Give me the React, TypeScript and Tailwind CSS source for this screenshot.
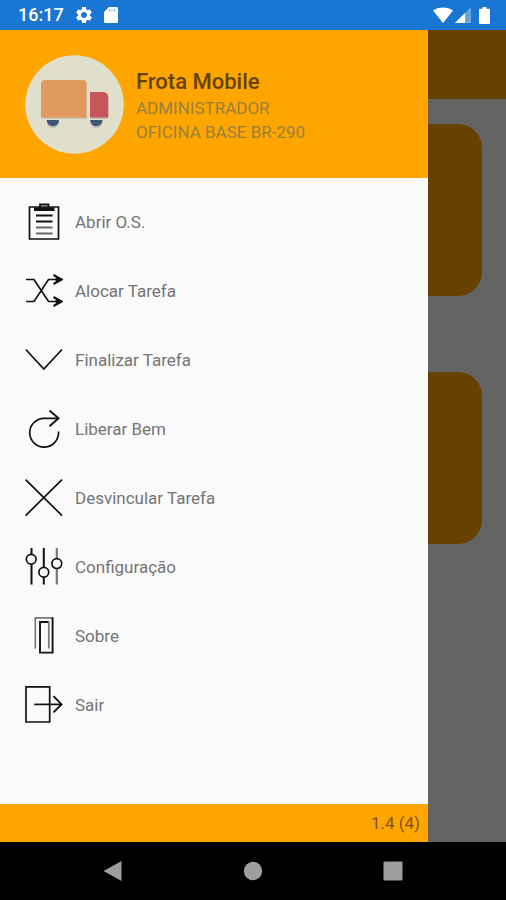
import type { ReactNode } from "react";

const menuItems: { label: string; icon: ReactNode }[] = [
  {
    label: "Abrir O.S.",
    icon: (
      <>
        <path d="M4.5 4H33.5V36H4.5Z" />
        <path d="M15 5.5V1.5H23.5V5.5" strokeWidth="1.8" />
        <path d="M9 6.2H29.5" strokeWidth="3.6" />
        <path d="M11 12.5H27.5M11 18.5H27.5" strokeWidth="2" />
        <path d="M11 24.5H27.5M11 30.5H27.5" stroke="#666" strokeWidth="2" />
      </>
    ),
  },
  {
    label: "Alocar Tarefa",
    icon: (
      <>
        <path d="M1 7.5H9L23.5 29.5H35M1 29.5H9L23.5 7.5H35" />
        <path d="M28.5 3L37 7.5L28.5 12M28.5 25L37 29.5L28.5 34" strokeWidth="2" />
        <path d="M31 5.5L36 7.5L31 9.5ZM31 27.5L36 29.5L31 31.5Z" fill="#111" strokeWidth="0.8" />
      </>
    ),
  },
  {
    label: "Finalizar Tarefa",
    icon: <path d="M0.8 8.5L18.8 28L37 8.5" />,
  },
  {
    label: "Liberar Bem",
    icon: (
      <>
        <path d="M33.5 21.5A14.4 14.4 0 1 1 19 8.3H33.5" />
        <path d="M24.5 0.5L33.5 8.3L24.5 16.3" strokeWidth="1.9" />
      </>
    ),
  },
  {
    label: "Desvincular Tarefa",
    icon: <path d="M0.6 0.6L37 36.6M37 0.6L0.6 36.6" />,
  },
  {
    label: "Configuração",
    icon: (
      <>
        <path d="M6.5 0V6.5M6.5 16V36.5M18.8 0V19.5M18.8 29V36.5" strokeWidth="2" />
        <path d="M31.8 0V10.5M31.8 20.5V36.5" stroke="#777" strokeWidth="2.2" />
        <circle cx="6.2" cy="11.3" r="4.9" />
        <circle cx="18.8" cy="24.3" r="4.9" />
        <circle cx="31.8" cy="15.6" r="4.9" />
      </>
    ),
  },
  {
    label: "Sobre",
    icon: (
      <>
        <path d="M10.3 31.5V0.8H27.6" stroke="#777" />
        <path d="M27.6 0.2V35.6H15V5H23.8" strokeWidth="1.9" />
        <path d="M23.8 5V31.5" stroke="#777" />
      </>
    ),
  },
  {
    label: "Sair",
    icon: (
      <>
        <path d="M1 0.8H24.7V36H1Z" />
        <path d="M9.3 18.4H36" />
        <path d="M28.5 10.2L36.5 18.4L28.5 26.4" strokeWidth="1.9" />
      </>
    ),
  },
];

function StatusBar() {
  return (
    <header className="flex h-[30px] items-center bg-[#1976d2] pl-[18px] pr-4 text-white">
      <span className="text-lg font-medium leading-6">16:17</span>
      <svg className="ml-[10px] size-5" viewBox="0 0 24 24" fill="currentColor" aria-hidden="true">
        <path d="M19.14 12.94c.04-.3.06-.61.06-.94 0-.32-.02-.64-.07-.94l2.03-1.58a.49.49 0 0 0 .12-.61l-1.92-3.32a.488.488 0 0 0-.59-.22l-2.39.96c-.5-.38-1.03-.7-1.62-.94l-.36-2.54a.484.484 0 0 0-.48-.41h-3.84c-.24 0-.43.17-.47.41l-.36 2.54c-.59.24-1.13.57-1.62.94l-2.39-.96c-.22-.08-.47 0-.59.22L2.74 8.87c-.12.21-.08.47.12.61l2.03 1.58c-.05.3-.09.63-.09.94s.02.64.07.94l-2.03 1.58a.49.49 0 0 0-.12.61l1.92 3.32c.12.22.37.29.59.22l2.39-.96c.5.38 1.03.7 1.62.94l.36 2.54c.05.24.24.41.48.41h3.84c.24 0 .44-.17.47-.41l.36-2.54c.59-.24 1.13-.56 1.62-.94l2.39.96c.22.08.47 0 .59-.22l1.92-3.32c.12-.22.07-.47-.12-.61l-2.01-1.58zM12 15.6A3.61 3.61 0 0 1 8.4 12c0-1.98 1.62-3.6 3.6-3.6s3.6 1.62 3.6 3.6-1.62 3.6-3.6 3.6z" />
      </svg>
      <svg className="ml-[10px] h-4 w-[14px]" viewBox="0 0 14 16" fill="currentColor" aria-hidden="true">
        <path d="M5 0H12.5Q14 0 14 1.5V14.5Q14 16 12.5 16H1.5Q0 16 0 14.5V5Z" />
        <path d="M5.5 2V4.5M8 2V4.5M10.5 2V4.5" stroke="#7fb2e8" strokeWidth="1" />
      </svg>
      <svg className="ml-auto h-4 w-5" viewBox="0 0 20 16" fill="currentColor" aria-hidden="true">
        <path d="M10 16L0 3.6Q4.2 0.5 10 0.5T20 3.6Z" />
      </svg>
      <svg className="ml-0.5 size-4" viewBox="0 0 16 16" fill="currentColor" aria-hidden="true">
        <path d="M0 16L16 0V16Z" opacity="0.35" />
        <path d="M0 16L10 6V16Z" />
      </svg>
      <svg className="ml-2 h-[17px] w-[11px]" viewBox="0 0 11 17" fill="currentColor" aria-hidden="true">
        <path d="M3.5 0H7.5V1.8H10Q11 1.8 11 2.8V16Q11 17 10 17H1Q0 17 0 16V2.8Q0 1.8 1 1.8H3.5Z" />
      </svg>
    </header>
  );
}

function TruckAvatar() {
  return (
    <svg className="size-[99px] shrink-0" viewBox="0 0 99 99" aria-hidden="true">
      <circle cx="49.5" cy="49.5" r="49.3" fill="#dfdfcb" />
      <path d="M21.7 67A6.2 6.2 0 0 0 34.1 67ZM65.1 67A6.2 6.2 0 0 0 77.5 67Z" fill="#c0c3b3" />
      <path d="M16 60H61.7V64H16ZM65 60H83.3V64H65Z" fill="#c5c5b2" />
      <path d="M21.7 65A6.2 6.2 0 0 0 34.1 65ZM65.1 65A6.2 6.2 0 0 0 77.5 65Z" fill="#3f5578" />
      <path d="M20 25H57.7Q61.7 25 61.7 29V62.5H18Q16 62.5 16 60.5V29Q16 25 20 25Z" fill="#e0995e" />
      <path d="M65 37H78.3Q83.3 37.5 83.3 42.5V62.5H65Z" fill="#c7555c" />
    </svg>
  );
}

function Drawer() {
  return (
    <aside className="z-10 col-start-1 row-start-1 mr-[78px] flex flex-col bg-[#fafafa]">
      <div className="flex h-[148px] items-center gap-3 bg-[#ffa500] pl-[25px]">
        <TruckAvatar />
        <div className="pt-1 text-[17px] leading-6 text-[#98803e]">
          <h1 className="text-[22px] font-medium leading-7 text-[#664200]">Frota Mobile</h1>
          <p>ADMINISTRADOR</p>
          <p>OFICINA BASE BR-290</p>
        </div>
      </div>
      <nav className="flex-1 py-[9px]">
        <ul>
          {menuItems.map((item) => (
            <li key={item.label}>
              <a href="#" className="flex h-[69px] items-center gap-3 pl-[25px] text-[17px] leading-6 text-[#757575]">
                <svg
                  className="size-[38px] shrink-0"
                  viewBox="0 0 38 38"
                  fill="none"
                  stroke="#111"
                  strokeWidth="1.7"
                  aria-hidden="true"
                >
                  {item.icon}
                </svg>
                {item.label}
              </a>
            </li>
          ))}
        </ul>
      </nav>
      <p className="bg-[#ffa500] px-2 py-[7px] text-right text-[17px] leading-6 text-[#7d5614]">1.4 (4)</p>
    </aside>
  );
}

// Main screen, dimmed while the drawer is open
function Backdrop() {
  return (
    <main className="col-start-1 row-start-1 bg-[#646464]">
      <div className="h-[69px] bg-[#664200]" />
      <div className="flex flex-col gap-[76px] px-6 py-[25px]">
        <div className="h-[172px] rounded-3xl bg-[#664200]" />
        <div className="h-[172px] rounded-3xl bg-[#664200]" />
      </div>
    </main>
  );
}

function SystemNav() {
  return (
    <footer className="flex h-[58px] justify-center bg-black text-[#9e9e9e]">
      <button aria-label="Voltar" className="flex w-[140px] items-center justify-center">
        <svg className="size-5" viewBox="0 0 20 20" fill="currentColor">
          <path d="M0.5 10L18.5 0V20Z" />
        </svg>
      </button>
      <button aria-label="Início" className="flex w-[140px] items-center justify-center">
        <svg className="size-5" viewBox="0 0 20 20" fill="currentColor">
          <circle cx="10" cy="10" r="9.2" />
        </svg>
      </button>
      <button aria-label="Recentes" className="flex w-[140px] items-center justify-center">
        <svg className="size-5" viewBox="0 0 20 20" fill="currentColor">
          <rect x="0.5" y="0.5" width="19" height="19" rx="1" />
        </svg>
      </button>
    </footer>
  );
}

export default function App() {
  return (
    <div className="flex min-h-screen flex-col font-[Roboto,sans-serif]">
      <StatusBar />
      <div className="grid flex-1 grid-cols-1">
        <Drawer />
        <Backdrop />
      </div>
      <SystemNav />
    </div>
  );
}
